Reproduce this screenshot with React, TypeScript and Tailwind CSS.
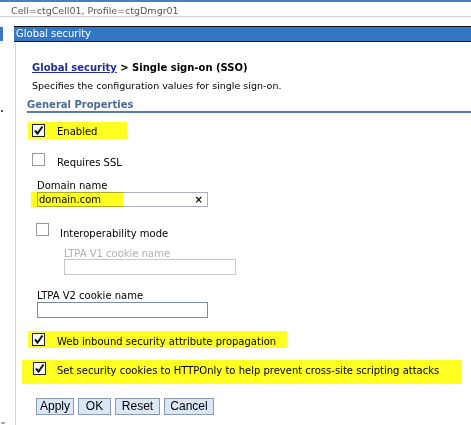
import React from "react";

function CheckBox({ checked }: { checked: boolean }) {
  return (
    <span
      className={`flex h-[13px] w-[13px] shrink-0 items-center justify-center border bg-white ${
        checked ? "border-[#222]" : "border-[#999]"
      }`}
    >
      {checked && (
        <svg width="11" height="11" viewBox="0 0 11 11">
          <path d="M2 5.5 L4.5 8.5 L9.5 1.5" fill="none" stroke="#111" strokeWidth="2" />
        </svg>
      )}
    </span>
  );
}

function Btn({ label, w }: { label: string; w: string }) {
  return (
    <button
      className={`${w} h-[17px] border border-[#8a9aab] bg-[#dbe7f6] text-[12px] leading-[15px] text-black`}
      style={{ fontFamily: '"Liberation Sans", Arial, sans-serif' }}
    >
      {label}
    </button>
  );
}

export default function App() {
  return (
    <div
      className="relative h-[425px] w-[471px] overflow-hidden bg-white text-[10px] leading-[12px] text-black"
      style={{ fontFamily: '"DejaVu Sans", Verdana, sans-serif' }}
    >
      <div className="h-[2px] bg-[#4a7fc0]" />
      {/* scope line */}
      <div className="h-[15px] border-b border-[#d0d4da] pl-[11px] pt-[3px] text-[9.5px] leading-[11px] text-[#555]">
        Cell=ctgCell01, Profile=ctgDmgr01
      </div>

      <div className="mt-[9px] flex items-center">
        <div className="h-[14px] w-[3px] bg-[#3a78c6]" />
        <div className="ml-[11px] flex h-[16px] flex-1 items-center border-y border-[#111] bg-[#3277c6] pl-[2px] text-white">
          Global security
        </div>
      </div>

      {/* stray marks on the left edge */}
      <div className="absolute left-[1px] top-[110px] h-[2px] w-[2px] bg-[#555]" />
      <div className="absolute left-[1px] top-[422px] h-[2px] w-[4px] bg-[#aaa]" />

      <div className="ml-[15px] flex h-[400px] border-l border-[#d4d8dd]">
        <div className="flex-1">
          <div className="ml-[16px] mt-[19px] text-[10px] font-bold leading-[14px]">
            <span className="text-[#1f2d9c] underline">Global security</span> &gt; Single sign-on (SSO)
          </div>
          <div className="ml-[16px] mt-[5px] text-[9.5px]">
            Specifies the configuration values for single sign-on.
          </div>

          <div className="ml-[11px] mt-[7px] border-b-2 border-[#5a7aa6] font-bold text-[#4a6a94]">
            General Properties
          </div>

          {/* Enabled */}
          <div className="ml-[12px] mt-[9px] flex h-[17px] w-[99px] items-center bg-[#ffff22] pl-[4px]">
            <CheckBox checked />
            <span className="ml-[12px] pt-[3px]">Enabled</span>
          </div>

          {/* Requires SSL */}
          <div className="ml-[16px] mt-[14px] flex h-[13px] items-start">
            <CheckBox checked={false} />
            <span className="ml-[12px] mt-[4px]">Requires SSL</span>
          </div>

          <div className="ml-[21px] mt-[14px]">Domain name</div>
          <div className="relative ml-[21px] flex h-[15px] w-[171px] items-center border border-[#a8b0bc] bg-white">
            <span className="absolute bottom-[-1px] left-[-7px] top-[-1px] w-[92px] bg-[#ffff22] mix-blend-multiply" />
            <span className="relative pl-[1px]">domain.com</span>
            <span className="relative ml-auto mr-[4px] font-bold">×</span>
          </div>

          {/* Interoperability */}
          <div className="ml-[20px] mt-[16px] flex h-[13px] items-start">
            <CheckBox checked={false} />
            <span className="ml-[11px] mt-[5px]">Interoperability mode</span>
          </div>
          <div className="ml-[48px] mt-[12px] leading-[11px] text-[#b0b0b0]">LTPA V1 cookie name</div>
          <div className="ml-[48px] h-[16px] w-[172px] border border-[#c8c8c8] bg-white" />

          <div className="ml-[21px] mt-[15px]">LTPA V2 cookie name</div>
          <div className="ml-[21px] h-[16px] w-[171px] border border-[#7a8ea6] bg-white" />

          {/* Web inbound */}
          <div className="ml-[12px] mt-[13px] flex h-[17px] w-[259px] items-center bg-[#ffff22] pl-[4px]">
            <CheckBox checked />
            <span className="ml-[12px] pt-[4px]">Web inbound security attribute propagation</span>
          </div>

          {/* HTTPOnly */}
          <div className="ml-[6px] mt-[12px] flex h-[24px] w-[440px] items-start bg-[#ffff22] pl-[11px]">
            <span className="mt-[2px]">
              <CheckBox checked />
            </span>
            <span className="ml-[11px] mt-[5px]">
              Set security cookies to HTTPOnly to help prevent cross-site scripting attacks
            </span>
          </div>

          <div className="ml-[20px] mt-[14px] flex gap-[4px]">
            <Btn label="Apply" w="w-[38px]" />
            <Btn label="OK" w="w-[33px]" />
            <Btn label="Reset" w="w-[45px]" />
            <Btn label="Cancel" w="w-[50px]" />
          </div>
        </div>
      </div>
    </div>
  );
}
